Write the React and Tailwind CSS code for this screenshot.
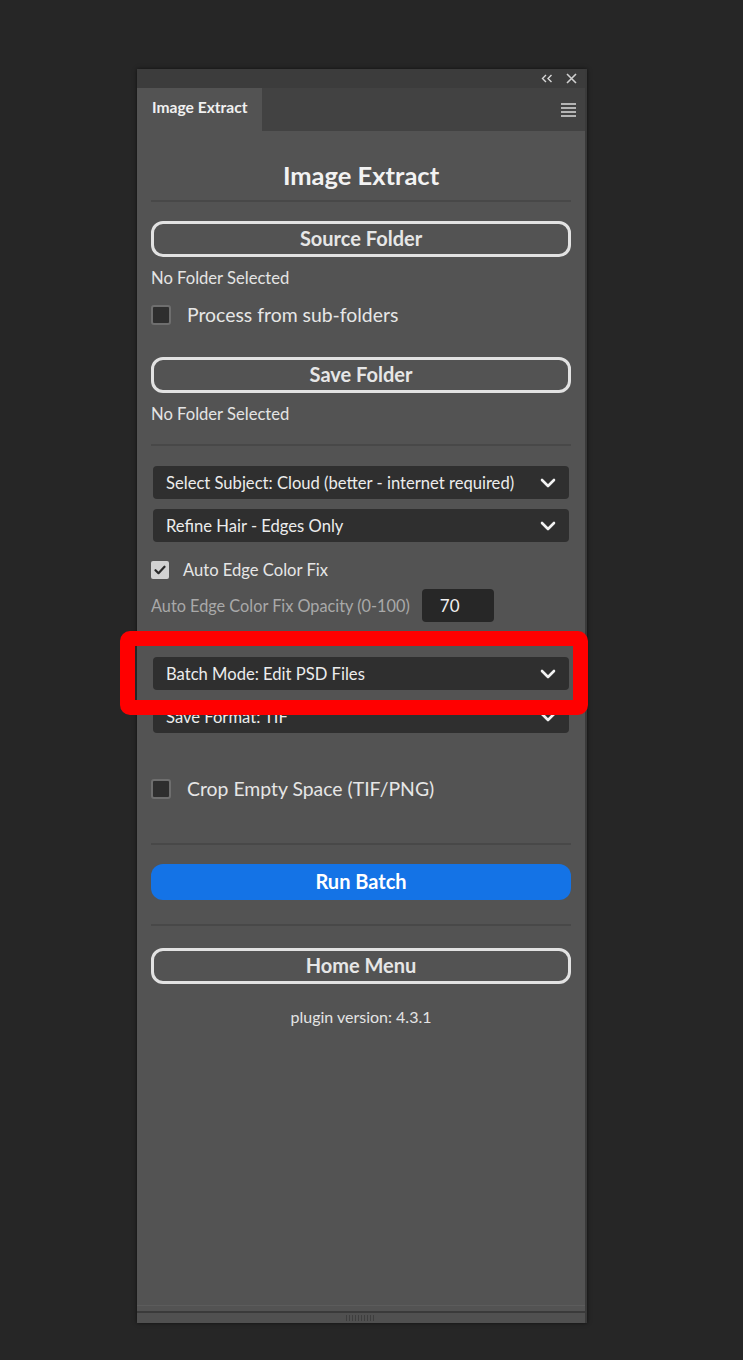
import { useState } from "react";

const font = { fontFamily: "Lato, 'Open Sans', sans-serif" };

const Chevron = () => (
    <svg width="16" height="10" viewBox="0 0 16 10" fill="none">
        <path d="M2 2l6 6 6-6" stroke="#f2f2f2" strokeWidth="2.6" strokeLinecap="round" strokeLinejoin="round" />
    </svg>
);

const Dropdown = ({ label, className = "" }) => (
    <div className={`flex h-[33px] items-center justify-between rounded-[4px] bg-[#2f2f2f] pl-[13px] pr-[13px] ${className}`}>
        <span className="mt-[2px] text-[16.6px] text-[#ececec]">{label}</span>
        <Chevron />
    </div>
);

const OutlineButton = ({ label, className = "" }) => (
    <div className={`flex h-[36px] items-center justify-center rounded-[12px] border-[3px] border-[#e2e2e2] ${className}`}>
        <span className="-mt-[3px] text-[20px] font-bold text-[#e6e6e6]">{label}</span>
    </div>
);

const Checkbox = ({ checked }) =>
    checked ? (
        <div className="flex h-[18px] w-[18px] items-center justify-center rounded-[2px] bg-[#d2d2d2]">
            <svg width="12" height="10" viewBox="0 0 12 10" fill="none">
                <path d="M1.5 5.2l3 3 6-6.5" stroke="#2a2a2a" strokeWidth="2.2" strokeLinecap="round" strokeLinejoin="round" />
            </svg>
        </div>
    ) : (
        <div className="h-[20px] w-[20px] rounded-[3px] border-2 border-[#6e6e6e] bg-[#2e2e2e]" />
    );

const Divider = ({ className = "" }) => <div className={`h-[2px] bg-[#484848] ${className}`} />;

export default function App() {
    const [opacity] = useState("70");

    return (
        <div className="relative min-h-[1360px] w-full bg-[#262626] pt-[69px]" style={font}>
            {/* Panel */}
            <div className="ml-[137px] flex h-[1254px] w-[450px] flex-col border-r-2 border-[#3a3a3a] bg-[#535353] shadow-[0_0_4px_rgba(0,0,0,0.6)]">
                {/* top strip */}
                <div className="flex h-[19px] items-center justify-end gap-[13px] bg-[#3c3c3c] pr-[8px]">
                    <svg width="12" height="9" viewBox="0 0 12 9" fill="none">
                        <path d="M5 1L1.5 4.5 5 8M10.5 1L7 4.5 10.5 8" stroke="#d8d8d8" strokeWidth="1.4" />
                    </svg>
                    <svg width="11" height="11" viewBox="0 0 11 11" fill="none">
                        <path d="M1 1l9 9M10 1l-9 9" stroke="#d0d0d0" strokeWidth="1.6" />
                    </svg>
                </div>
                {/* tab row */}
                <div className="flex h-[43px] bg-[#424242]">
                    <div className="flex w-[125px] items-start bg-[#535353] pl-[15px] pt-[8px]">
                        <span className="text-[15.6px] font-bold text-[#f0f0f0]">Image Extract</span>
                    </div>
                    <div className="flex flex-1 items-center justify-end pr-[9px]">
                        <div className="flex w-[15px] flex-col gap-[2px]">
                            <div className="h-[2px] bg-[#b4b4b4]" />
                            <div className="h-[2px] bg-[#b4b4b4]" />
                            <div className="h-[2px] bg-[#b4b4b4]" />
                            <div className="h-[2px] bg-[#b4b4b4]" />
                        </div>
                    </div>
                </div>

                {/* content */}
                <div className="flex flex-1 flex-col pl-[14px] pr-[14px]">
                    <div className="flex h-[69px] items-end justify-center pb-[12px]">
                        <span className="text-[25.5px] font-bold leading-none text-[#f2f2f2]">Image Extract</span>
                    </div>
                    <Divider />

                    <OutlineButton label="Source Folder" className="mt-[19px]" />
                    <div className="flex h-[42px] items-center text-[16.6px] text-[#e4e4e4]">No Folder Selected</div>
                    <div className="flex h-[32px] items-center gap-[16px]">
                        <Checkbox />
                        <span className="text-[19.4px] text-[#e6e6e6]">Process from sub-folders</span>
                    </div>

                    <OutlineButton label="Save Folder" className="mt-[26px]" />
                    <div className="flex h-[42px] items-center text-[16.6px] text-[#e4e4e4]">No Folder Selected</div>
                    <Divider className="mt-[9px]" />

                    <Dropdown label="Select Subject: Cloud (better - internet required)" className="mx-[2px] mt-[20px]" />
                    <Dropdown label="Refine Hair - Edges Only" className="mx-[2px] mt-[10px]" />

                    <div className="mt-[18px] flex h-[19px] items-center gap-[14px]">
                        <Checkbox checked />
                        <span className="mt-[1px] text-[16.6px] text-[#e6e6e6]">Auto Edge Color Fix</span>
                    </div>
                    <div className="mt-[10px] flex h-[33px] items-center gap-[12px]">
                        <span className="mt-[1px] text-[16.3px] text-[#a9a9a9]">Auto Edge Color Fix Opacity (0-100)</span>
                        <div className="flex h-[33px] w-[72px] items-center rounded-[4px] bg-[#272727] pl-[18px] pt-[1px] text-[17px] text-[#f0f0f0]">
                            {opacity}
                        </div>
                    </div>

                    <Dropdown label="Batch Mode: Edit PSD Files" className="mx-[2px] mt-[35px]" />
                    <Dropdown label="Save Format: TIF" className="mx-[2px] mt-[10px]" />

                    <div className="mt-[46px] flex h-[20px] items-center gap-[16px]">
                        <Checkbox />
                        <span className="text-[19.4px] text-[#e6e6e6]">Crop Empty Space (TIF/PNG)</span>
                    </div>

                    <Divider className="mt-[44px]" />
                    <div className="mt-[19px] flex h-[36px] items-center justify-center rounded-[12px] bg-[#1473e6]">
                        <span className="-mt-[2px] text-[20px] font-bold text-white">Run Batch</span>
                    </div>
                    <Divider className="mt-[24px]" />

                    <OutlineButton label="Home Menu" className="mt-[22px]" />
                    <div className="mt-[21px] text-center text-[16px] text-[#e4e4e4]">plugin version: 4.3.1</div>
                </div>

                {/* bottom grip */}
                <div className="h-px bg-[#5c5c5c]" />
                <div className="mt-[5px] h-[2px] bg-[#3a3a3a]" />
                <div className="flex h-[10px] items-center justify-center bg-[#505050]">
                    <div className="h-[6px] w-[30px] bg-[repeating-linear-gradient(90deg,#3e3e3e_0px,#3e3e3e_1px,transparent_1px,transparent_3px)]" />
                </div>
            </div>

            {/* annotation box */}
            <div className="pointer-events-none absolute left-[120px] top-[631px] h-[84px] w-[468px] rounded-[10px] border-[15px] border-[#ff0000]">
                <div className="h-full w-[2px] bg-[#262626]" />
            </div>
        </div>
    );
}
